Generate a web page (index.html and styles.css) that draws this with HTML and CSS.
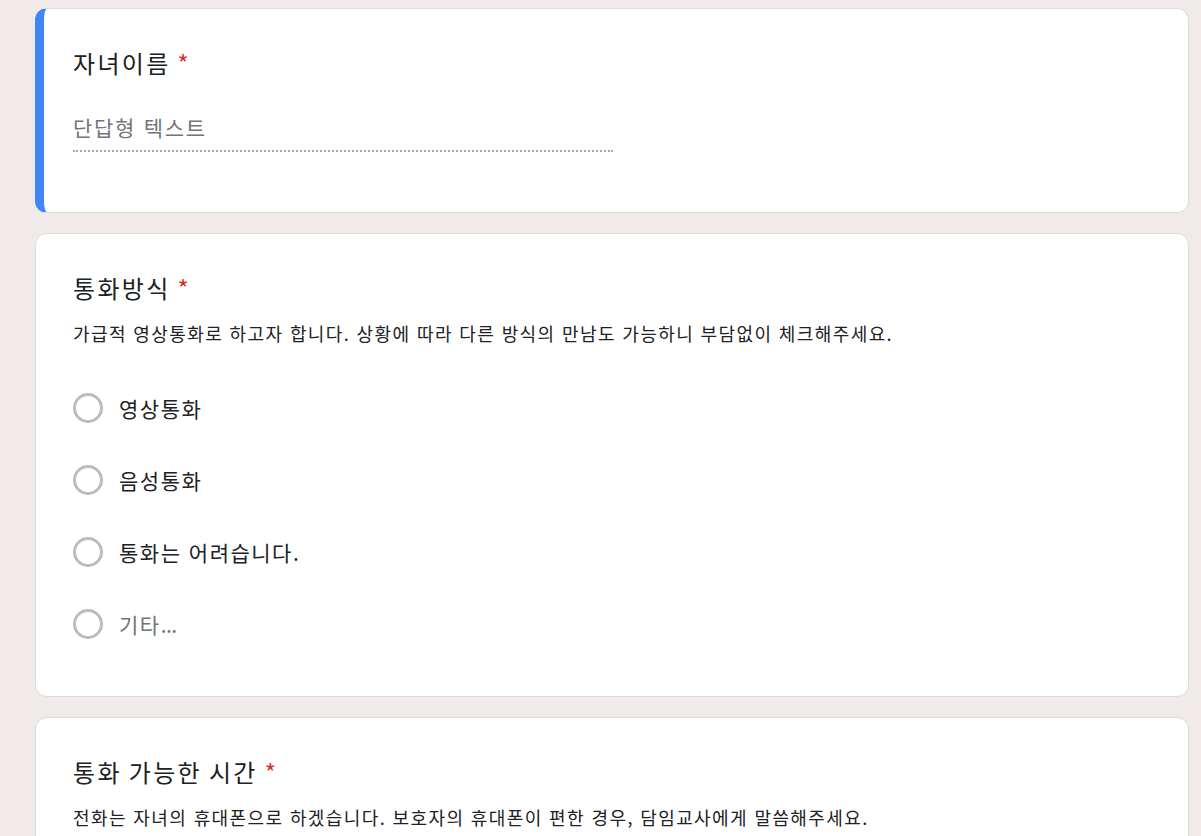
FILE: index.html
```html
<!DOCTYPE html>
<html lang="ko">
<head>
    <meta charset="utf-8">
    <title>설문</title>
    <link rel="stylesheet" href="styles.css">
</head>
<body>
    <div class="form">
        <div class="card focused">
            <div class="title">자녀이름 <span class="req">*</span></div>
            <div class="short-answer">단답형 텍스트</div>
        </div>

        <div class="card">
            <div class="title">통화방식 <span class="req">*</span></div>
            <div class="desc">가급적 영상통화로 하고자 합니다. 상황에 따라 다른 방식의 만남도 가능하니 부담없이 체크해주세요.</div>
            <div class="options">
                <div class="option"><span class="radio"></span><span class="label">영상통화</span></div>
                <div class="option"><span class="radio"></span><span class="label">음성통화</span></div>
                <div class="option"><span class="radio"></span><span class="label">통화는 어려습니다.</span></div>
                <div class="option"><span class="radio"></span><span class="label other">기타<span class="dots">...</span></span></div>
            </div>
        </div>

        <div class="card">
            <div class="title">통화 가능한 시간 <span class="req">*</span></div>
            <div class="desc">전화는 자녀의 휴대폰으로 하겠습니다. 보호자의 휴대폰이 편한 경우, 담임교사에게 말씀해주세요.</div>
        </div>
    </div>
</body>
</html>
```

FILE: styles.css
```css
html, body {
    margin: 0;
    height: 100%;
    overflow: hidden;
}
body {
    background-color: #f0ebe8;
    font-family: "Noto Sans CJK KR", "Noto Sans", sans-serif;
    color: #202124;
}
.form {
    display: flex;
    flex-direction: column;
    gap: 20px;
    padding: 8px 12px 0 35px;
}
.card {
    background: #fff;
    border: 1px solid #dadce0;
    border-radius: 12px;
    padding: 36px 36px 36px 37px;
}
.card.focused {
    border-left: 9px solid #4285f4;
    padding-left: 29px;
}
.title {
    font-size: 24px;
    line-height: 36px;
    letter-spacing: 2.3px;
    word-spacing: -2px;
}
.req {
    color: #d93025;
}
.desc {
    margin-top: 14px;
    font-size: 18px;
    line-height: 27px;
    letter-spacing: 1.4px;
}
.short-answer {
    width: 540px;
    margin: 31px 0 24px 0;
    padding-bottom: 8px;
    font-size: 21px;
    line-height: 30px;
    color: #70757a;
    letter-spacing: 1.7px;
    border-bottom: 2px dotted #a6a6a6;
}
.options {
    margin-top: 25px;
}
.option {
    display: flex;
    align-items: center;
    height: 72px;
}
.radio {
    box-sizing: border-box;
    width: 30px;
    height: 30px;
    border: 3px solid #bdbdbd;
    border-radius: 50%;
    margin-right: 16px;
}
.label {
    font-size: 21px;
    letter-spacing: 1.5px;
}
.label.other {
    color: #70757a;
}
.dots {
    letter-spacing: -0.5px;
}
```
